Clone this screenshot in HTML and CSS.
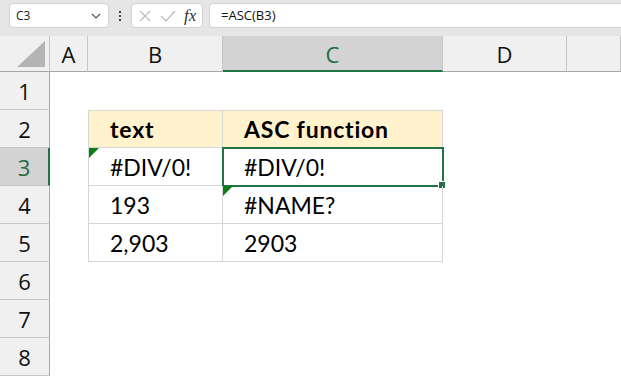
FILE: index.html
```html
<!DOCTYPE html>
<html lang="en">
<head>
    <meta charset="UTF-8">
    <meta name="viewport" content="width=device-width, initial-scale=1.0">
    <title>ASC function</title>
    <link rel="stylesheet" href="styles.css">
</head>
<body>
    <div class="formula-bar">
        <div class="name-box">
            <span>C3</span>
            <svg class="chevron" width="10" height="6" viewBox="0 0 10 6"><path d="M1 1 L5 5 L9 1" fill="none" stroke="#555" stroke-width="1.2"/></svg>
        </div>
        <div class="dots"><i></i><i></i><i></i></div>
        <div class="fx-box">
            <svg width="12" height="12" viewBox="0 0 12 12"><path d="M1 1 L11 11 M11 1 L1 11" stroke="#bcbcbc" stroke-width="1.2" fill="none"/></svg>
            <svg width="16" height="12" viewBox="0 0 16 12"><path d="M1 6 L6 11 L15 1" stroke="#bcbcbc" stroke-width="1.2" fill="none"/></svg>
            <span class="fx">fx</span>
        </div>
        <div class="formula-input">=ASC(B3)</div>
    </div>

    <div class="sheet">
        <!-- column headers -->
        <div class="corner"><svg width="30" height="28" viewBox="0 0 30 28"><path d="M29 1 L29 27 L1 27 Z" fill="#b4b4b4"/></svg></div>
        <div class="col-head">A</div>
        <div class="col-head">B</div>
        <div class="col-head selected">C</div>
        <div class="col-head">D</div>
        <div class="col-head"></div>

        <!-- row 1 -->
        <div class="row-head">1</div>
        <div class="cell"></div><div class="cell"></div><div class="cell"></div><div class="cell"></div><div class="cell"></div>

        <!-- row 2 -->
        <div class="row-head">2</div>
        <div class="cell"></div>
        <div class="cell tbl head first-col first-row">text</div>
        <div class="cell tbl head first-row">ASC function</div>
        <div class="cell"></div><div class="cell"></div>

        <!-- row 3 -->
        <div class="row-head selected">3</div>
        <div class="cell"></div>
        <div class="cell tbl first-col flag">#DIV/0!</div>
        <div class="cell tbl active">#DIV/0!<span class="handle"></span></div>
        <div class="cell"></div><div class="cell"></div>

        <!-- row 4 -->
        <div class="row-head">4</div>
        <div class="cell"></div>
        <div class="cell tbl first-col">193</div>
        <div class="cell tbl flag">#NAME?</div>
        <div class="cell"></div><div class="cell"></div>

        <!-- row 5 -->
        <div class="row-head">5</div>
        <div class="cell"></div>
        <div class="cell tbl first-col">2,903</div>
        <div class="cell tbl">2903</div>
        <div class="cell"></div><div class="cell"></div>

        <div class="row-head">6</div>
        <div class="cell"></div><div class="cell"></div><div class="cell"></div><div class="cell"></div><div class="cell"></div>
        <div class="row-head">7</div>
        <div class="cell"></div><div class="cell"></div><div class="cell"></div><div class="cell"></div><div class="cell"></div>
        <div class="row-head">8</div>
        <div class="cell"></div><div class="cell"></div><div class="cell"></div><div class="cell"></div><div class="cell"></div>
    </div>
</body>
</html>
```

FILE: styles.css
```css
* {
    box-sizing: border-box;
}
body {
    margin: 0;
    background-color: #fff;
    font-family: "Open Sans", "Noto Sans", sans-serif;
    overflow: hidden;
}
.formula-bar {
    height: 36px;
    background-color: #e6e6e6;
    display: flex;
    align-items: flex-start;
    padding-top: 3px;
    padding-left: 9px;
}
.name-box {
    width: 100px;
    height: 25px;
    background-color: #fff;
    border: 1px solid #d2d2d2;
    border-radius: 4px;
    display: flex;
    align-items: center;
    justify-content: space-between;
    padding: 0 7px 0 6px;
    font-size: 12px;
    color: #222;
}
.dots {
    width: 22px;
    height: 25px;
    display: flex;
    flex-direction: column;
    align-items: center;
    justify-content: center;
    gap: 2px;
}
.dots i {
    width: 2px;
    height: 2px;
    background-color: #444;
}
.fx-box {
    width: 72px;
    height: 25px;
    background-color: #fff;
    border: 1px solid #d2d2d2;
    border-radius: 4px;
    display: flex;
    align-items: center;
    gap: 9px;
    padding-left: 7px;
}
.fx {
    font-family: "Liberation Serif", serif;
    font-style: italic;
    font-size: 17px;
    color: #333;
    margin-left: -1px;
    line-height: 1;
}
.formula-input {
    flex: 1;
    height: 25px;
    margin-left: 6px;
    background-color: #fff;
    border: 1px solid #d2d2d2;
    border-right: none;
    border-radius: 4px 0 0 4px;
    font-size: 13px;
    color: #111;
    padding-left: 11px;
    line-height: 23px;
}
.sheet {
    display: grid;
    grid-template-columns: 50px 38px 135px 220px 124px 1fr;
    grid-template-rows: 36px repeat(8, 38px);
}
.corner {
    background-color: #f0f0f0;
    border-right: 1px solid #c6c6c6;
    border-bottom: 1px solid #a6a6a6;
    display: flex;
    align-items: flex-end;
    justify-content: flex-end;
    padding: 0 3px 3px 0;
}
.col-head {
    background-color: #f0f0f0;
    border-right: 1px solid #c6c6c6;
    border-bottom: 1px solid #a6a6a6;
    display: flex;
    align-items: center;
    justify-content: center;
    font-size: 22px;
    color: #111;
    padding-top: 1px;
}
.row-head {
    background-color: #f0f0f0;
    border-right: 1px solid #a6a6a6;
    border-bottom: 1px solid #c6c6c6;
    display: flex;
    align-items: center;
    justify-content: center;
    font-size: 22px;
    color: #111;
}
.col-head.selected {
    background-color: #d3d3d3;
    border-bottom: 2px solid #217346;
    color: #1e6b40;
}
.row-head.selected {
    background-color: #d3d3d3;
    border-right: 2px solid #217346;
    color: #1e6b40;
}
.cell {
    position: relative;
    font-family: Lato, "Open Sans", sans-serif;
    font-size: 23px;
    color: #000;
    display: flex;
    align-items: center;
    padding-left: 21px;
    white-space: nowrap;
}
.tbl {
    border-right: 1px solid #d6d6d6;
    border-bottom: 1px solid #d6d6d6;
}
.tbl.first-col {
    border-left: 1px solid #d6d6d6;
}
.tbl.first-row {
    border-top: 1px solid #d6d6d6;
}
.tbl.head {
    background-color: #fff2cc;
    font-weight: bold;
    letter-spacing: 0.8px;
}
.flag::before {
    content: "";
    position: absolute;
    left: 0;
    top: 0;
    border-top: 10px solid #0c7d19;
    border-right: 10px solid transparent;
}
.active {
    outline: 2px solid #217346;
    outline-offset: -1px;
}
.handle {
    position: absolute;
    right: -4px;
    bottom: -4px;
    width: 6px;
    height: 6px;
    background-color: #217346;
    border: 1px solid #fff;
    box-sizing: content-box;
}
```
